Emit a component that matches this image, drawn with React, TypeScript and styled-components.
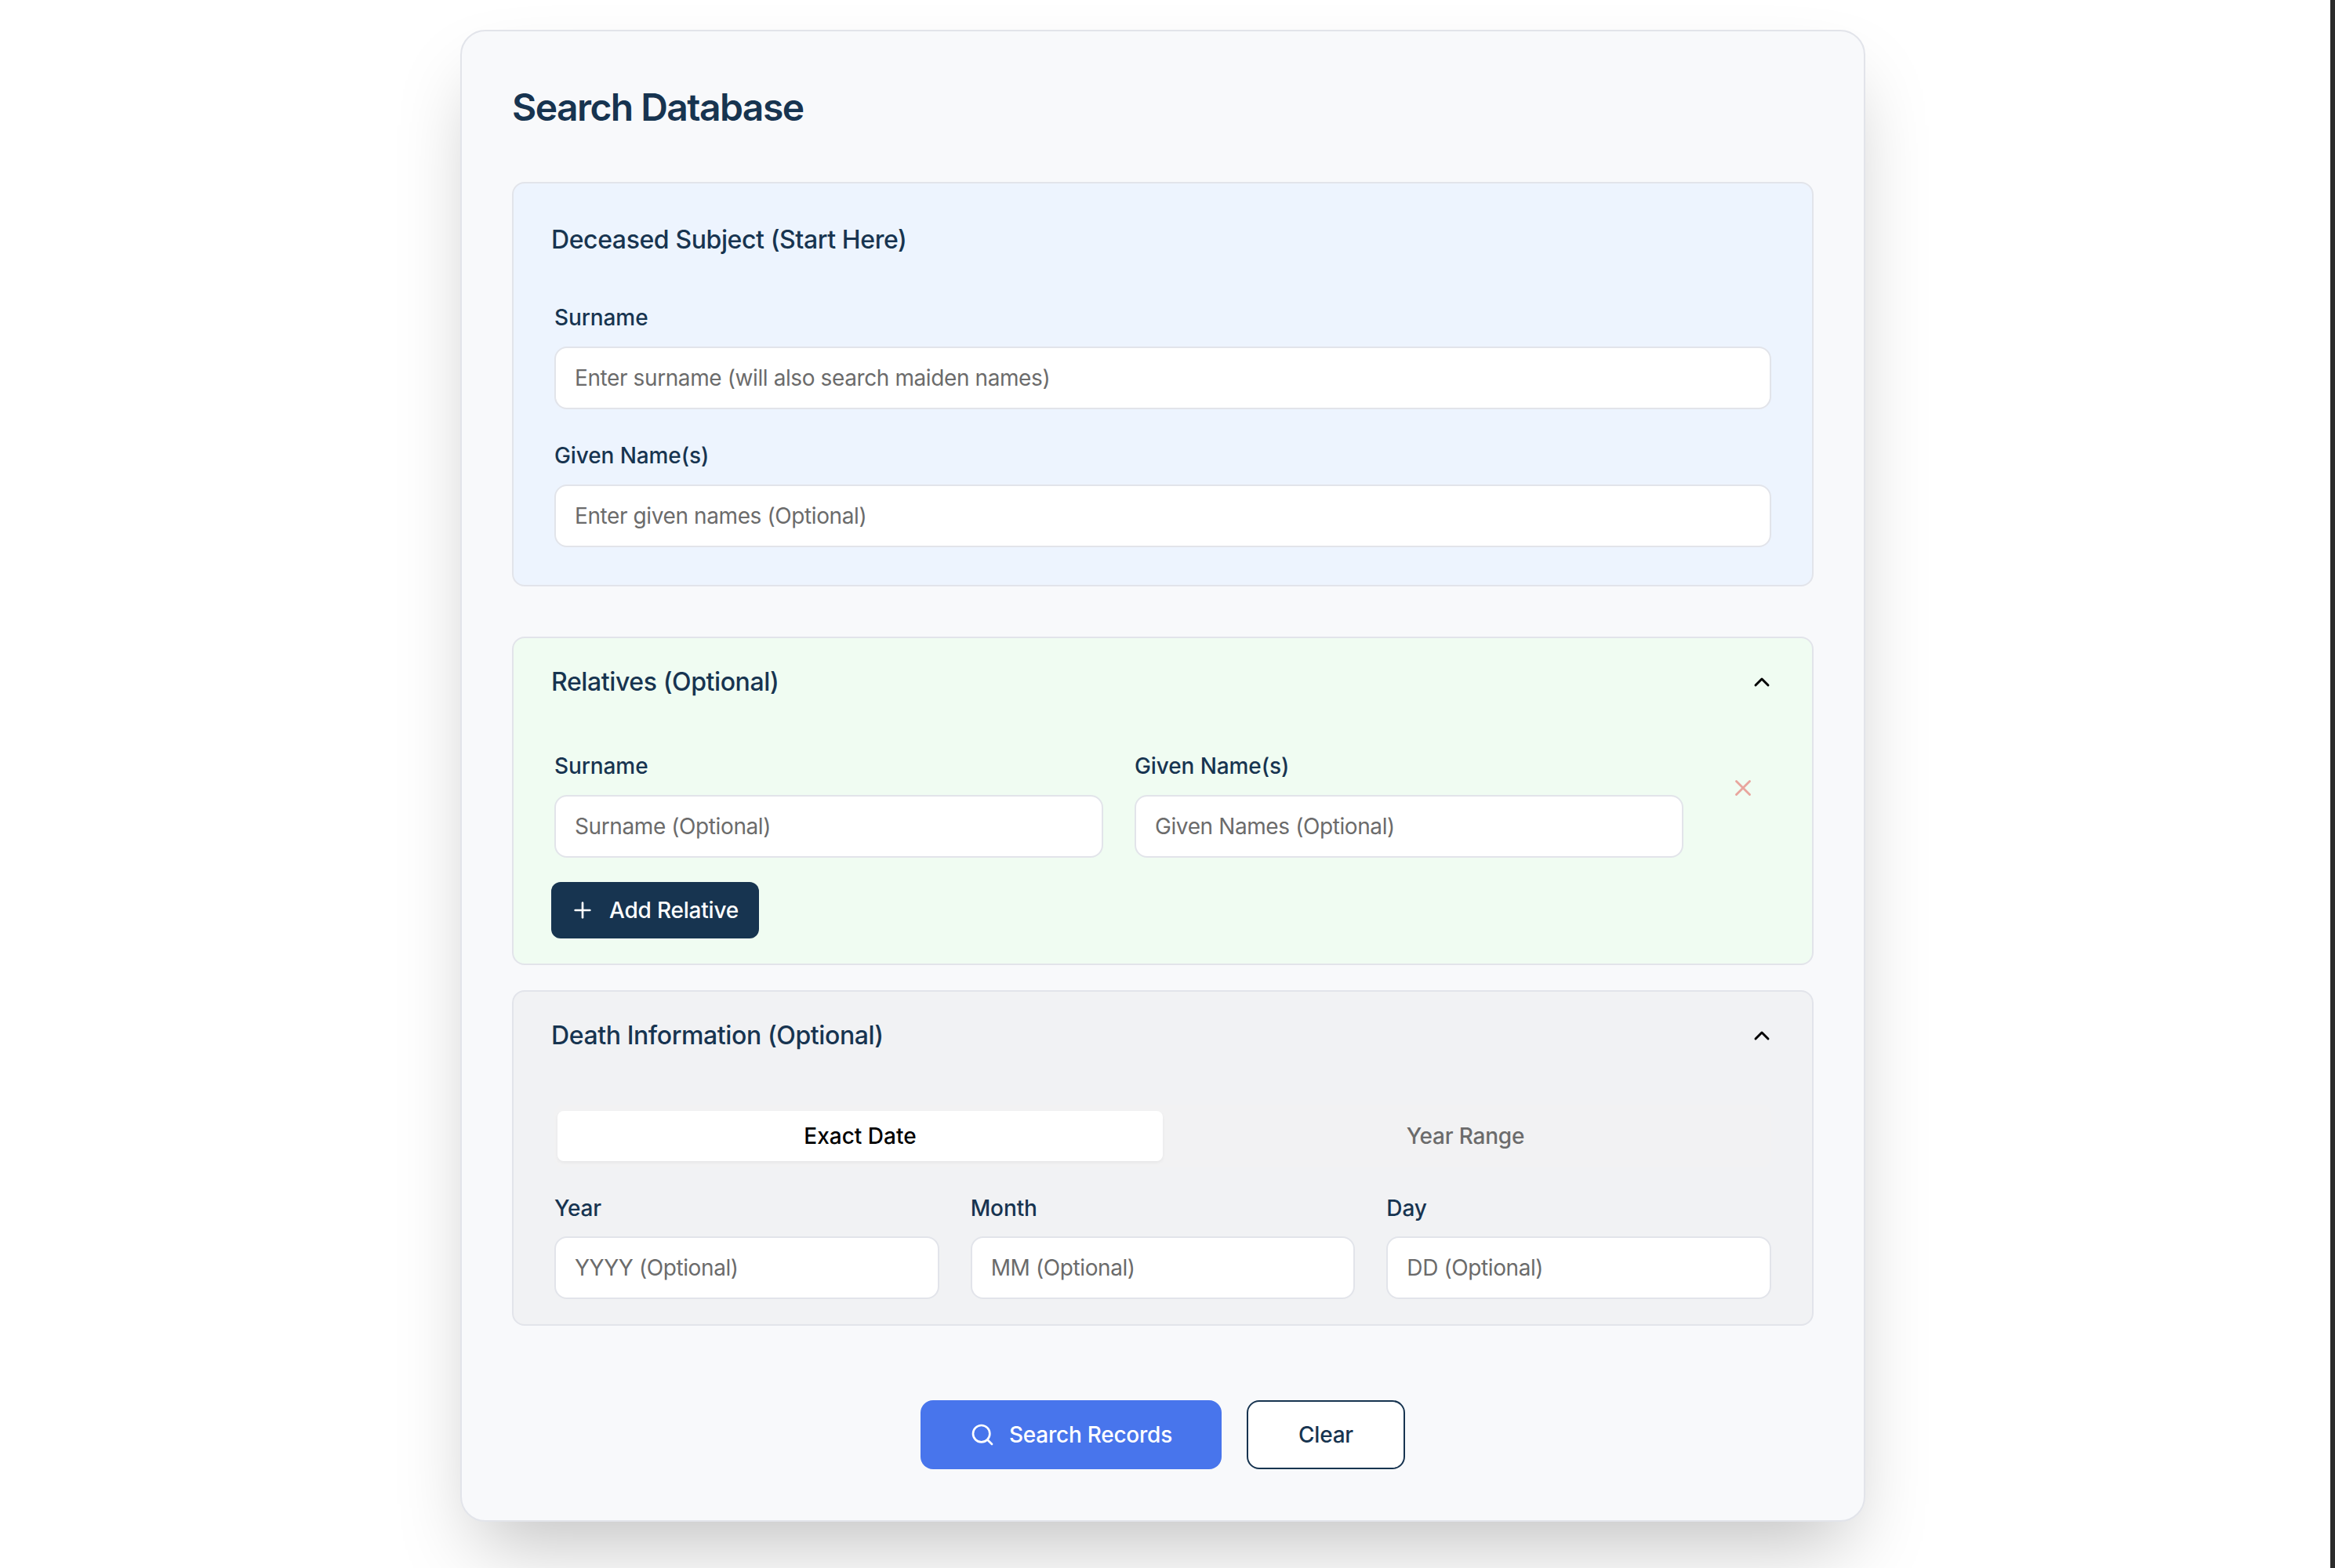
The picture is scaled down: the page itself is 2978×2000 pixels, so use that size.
import React from "react";
import styled, { createGlobalStyle } from "styled-components";
import { ChevronUp, Plus, Search, X } from "lucide-react";

const NAVY = "#173450";

const GlobalStyle = createGlobalStyle`
  html, body {
    margin: 0;
    padding: 0;
    background: #ffffff;
  }
  * {
    box-sizing: border-box;
  }
  body {
    font-family: Inter, "Liberation Sans", sans-serif;
  }
`;

const Page = styled.div`
  display: flex;
  justify-content: center;
  height: 2000px;
  padding: 38px 12px 0 0;
  overflow: hidden;
`;

const Card = styled.form`
  width: 1792px;
  height: 1903px;
  padding: 68px 64px 64px;
  background: #f8f9fb;
  border: 2px solid #e2e4ea;
  border-radius: 32px;
  box-shadow: 0 50px 100px -24px rgba(0, 0, 0, 0.25);
`;

const Title = styled.h1`
  margin: 0 0 66px;
  font-size: 48px;
  line-height: 58px;
  font-weight: 600;
  letter-spacing: -1.55px;
  color: ${NAVY};
`;

const Section = styled.section<{ $bg: string; $top: number; $bottom: number; $gap?: number }>`
  margin-top: ${(p) => p.$gap ?? 0}px;
  padding: ${(p) => p.$top}px 48px ${(p) => p.$bottom}px;
  background: ${(p) => p.$bg};
  border: 2px solid #e2e4ea;
  border-radius: 16px;
`;

const SectionHeader = styled.div<{ $mb: number }>`
  display: flex;
  align-items: center;
  justify-content: space-between;
  margin-bottom: ${(p) => p.$mb}px;
`;

const SectionTitle = styled.h2`
  margin: 0;
  font-size: 32px;
  line-height: 48px;
  font-weight: 500;
  letter-spacing: -0.4px;
  color: ${NAVY};
`;

const Chevron = styled(ChevronUp)`
  width: 32px;
  height: 32px;
  color: #000000;
  stroke-width: 2.2;
`;

const Fields = styled.div`
  display: flex;
  flex-direction: column;
  gap: 42px;
  padding: 0 4px;
`;

const Field = styled.label<{ $gap: number }>`
  display: flex;
  flex-direction: column;
  gap: ${(p) => p.$gap}px;
  min-width: 0;
`;

const FieldLabel = styled.span`
  font-size: 28px;
  line-height: 34px;
  font-weight: 500;
  letter-spacing: -0.1px;
  color: ${NAVY};
`;

const Input = styled.input`
  width: 100%;
  height: 80px;
  padding: 0 24px;
  font-family: inherit;
  font-size: 28px;
  letter-spacing: -0.4px;
  background: #ffffff;
  border: 2px solid #e2e4ea;
  border-radius: 16px;
  outline: none;

  &::placeholder {
    color: #6b6b6b;
    opacity: 1;
  }
`;

const RelativeRow = styled.div`
  display: grid;
  grid-template-columns: 1fr 1fr 76px;
  column-gap: 40px;
  padding-left: 4px;
`;

const RemoveButton = styled.button`
  display: flex;
  justify-content: center;
  align-self: start;
  margin-top: 28px;
  padding: 0 4px 0 0;
  background: none;
  border: none;
  color: #e8a59d;
`;

const AddButton = styled.button`
  display: inline-flex;
  align-items: center;
  gap: 18px;
  height: 72px;
  margin-top: 31px;
  padding: 0 26px 0 24px;
  font-family: inherit;
  font-size: 28px;
  font-weight: 500;
  letter-spacing: -0.2px;
  color: #ffffff;
  background: ${NAVY};
  border: none;
  border-radius: 12px;
`;

const Tabs = styled.div`
  display: grid;
  grid-template-columns: 1fr 1fr;
  height: 80px;
  margin: 0 4px 35px;
  padding: 8px 4px;
  background: #f2f2f3;
  border-radius: 12px;
`;

const Tab = styled.div<{ $active?: boolean }>`
  display: flex;
  align-items: center;
  justify-content: center;
  font-size: 28px;
  font-weight: 500;
  letter-spacing: ${(p) => (p.$active ? "0" : "-0.2px")};
  color: ${(p) => (p.$active ? "#000000" : "#6b6b6b")};
  background: ${(p) => (p.$active ? "#ffffff" : "transparent")};
  border-radius: 8px;
  box-shadow: ${(p) => (p.$active ? "0 2px 4px rgba(0,0,0,0.05)" : "none")};
`;

const DateRow = styled.div`
  display: grid;
  grid-template-columns: repeat(3, 1fr);
  column-gap: 40px;
  padding: 0 4px;
`;

const Actions = styled.div`
  display: flex;
  justify-content: center;
  gap: 32px;
  margin-top: 95px;
`;

const SearchButton = styled.button`
  display: inline-flex;
  align-items: center;
  gap: 18px;
  height: 88px;
  padding: 0 63px;
  font-family: inherit;
  font-size: 28px;
  font-weight: 500;
  letter-spacing: -0.25px;
  color: #ffffff;
  background: #4875ec;
  border: none;
  border-radius: 16px;
`;

const ClearButton = styled.button`
  height: 88px;
  width: 202px;
  font-family: inherit;
  font-size: 28px;
  font-weight: 500;
  letter-spacing: -0.2px;
  color: ${NAVY};
  background: #ffffff;
  border: 2px solid ${NAVY};
  border-radius: 16px;
`;

const RightEdge = styled.div`
  position: fixed;
  top: 0;
  right: 0;
  width: 6px;
  height: 2000px;
  background: #2b2b2b;
`;

export default function App() {
  return (
    <>
      <GlobalStyle />
      <Page>
        <Card>
          <Title>Search Database</Title>

          <Section $bg="#edf4fe" $top={48} $bottom={48}>
            <SectionHeader $mb={58}>
              <SectionTitle>Deceased Subject (Start Here)</SectionTitle>
            </SectionHeader>
            <Fields>
              <Field $gap={20}>
                <FieldLabel>Surname</FieldLabel>
                <Input placeholder="Enter surname (will also search maiden names)" />
              </Field>
              <Field $gap={20}>
                <FieldLabel>Given Name(s)</FieldLabel>
                <Input placeholder="Enter given names (Optional)" />
              </Field>
            </Fields>
          </Section>

          <Section $bg="#f0fcf2" $top={32} $bottom={32} $gap={64}>
            <SectionHeader $mb={66}>
              <SectionTitle>Relatives (Optional)</SectionTitle>
              <Chevron />
            </SectionHeader>
            <RelativeRow>
              <Field $gap={20}>
                <FieldLabel>Surname</FieldLabel>
                <Input placeholder="Surname (Optional)" />
              </Field>
              <Field $gap={20}>
                <FieldLabel>Given Name(s)</FieldLabel>
                <Input placeholder="Given Names (Optional)" />
              </Field>
              <RemoveButton type="button">
                <X size={34} strokeWidth={2} />
              </RemoveButton>
            </RelativeRow>
            <AddButton type="button">
              <Plus size={32} strokeWidth={2} />
              Add Relative
            </AddButton>
          </Section>

          <Section $bg="#f1f2f4" $top={32} $bottom={32} $gap={32}>
            <SectionHeader $mb={64}>
              <SectionTitle>Death Information (Optional)</SectionTitle>
              <Chevron />
            </SectionHeader>
            <Tabs>
              <Tab $active>Exact Date</Tab>
              <Tab>Year Range</Tab>
            </Tabs>
            <DateRow>
              <Field $gap={19}>
                <FieldLabel>Year</FieldLabel>
                <Input placeholder="YYYY (Optional)" />
              </Field>
              <Field $gap={19}>
                <FieldLabel>Month</FieldLabel>
                <Input placeholder="MM (Optional)" />
              </Field>
              <Field $gap={19}>
                <FieldLabel>Day</FieldLabel>
                <Input placeholder="DD (Optional)" />
              </Field>
            </DateRow>
          </Section>

          <Actions>
            <SearchButton type="button">
              <Search size={32} strokeWidth={2} />
              Search Records
            </SearchButton>
            <ClearButton type="button">Clear</ClearButton>
          </Actions>
        </Card>
      </Page>
      <RightEdge />
    </>
  );
}
